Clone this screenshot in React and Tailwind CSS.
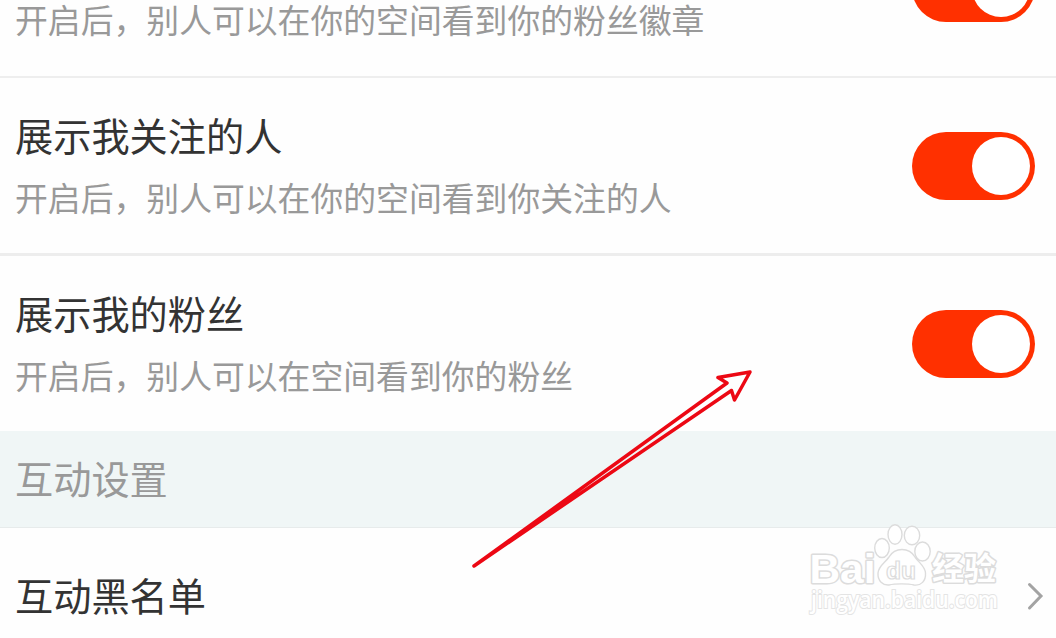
import React, { useState } from 'react';

// Pill shaped on/off switch
const Toggle = ({ defaultOn = true }) => {
  const [on, setOn] = useState(defaultOn);

  return (
    <button
      role="switch"
      aria-checked={on}
      onClick={() => setOn(!on)}
      className={`flex h-[68px] w-[123px] shrink-0 items-center rounded-full pr-[5px] pl-[5px] ${
        on ? 'justify-end bg-[#ff3000]' : 'justify-start bg-[#dddddd]'
      }`}
    >
      <span className="block size-[58px] rounded-full bg-white" />
    </button>
  );
};

const SettingRow = ({ title, desc }) => (
  <div className="flex h-[175px] w-full shrink-0 items-center justify-between pr-[21px] pl-[15px]">
    <div className="h-full whitespace-nowrap pt-[23px]">
      <h2 className="text-[38.2px] leading-[68px] text-[#333333]">{title}</h2>
      <p className="text-[32.85px] leading-[56px] text-[#999999]">{desc}</p>
    </div>
    <Toggle />
  </div>
);

// Red pointer drawn over the list
const Arrow = () => (
  <svg className="pointer-events-none absolute inset-0" width="1056" height="638" fill="none">
    <path
      d="M474 566 L727 383 L718 377.5 L750 372 L734.5 400 L731.5 390.5 Z"
      stroke="#ec0814"
      strokeWidth="3.5"
      strokeLinejoin="round"
    />
  </svg>
);

const Watermark = () => (
  <svg
    className="pointer-events-none absolute top-[520px] left-[804px]"
    width="200"
    height="100"
    viewBox="804 520 200 100"
    fill="#ffffff"
    stroke="#dcdcdc"
    strokeWidth="1.4"
  >
    <g fontWeight="bold" strokeWidth="3" strokeLinejoin="round" paintOrder="stroke">
      <text x="809.5" y="582.5" fontSize="41.5" textLength="66" lengthAdjust="spacingAndGlyphs" fontFamily="Liberation Sans, sans-serif">Bai</text>
      <text x="932" y="580" fontSize="32" textLength="64" lengthAdjust="spacingAndGlyphs" fontFamily="Noto Sans CJK SC, sans-serif">经验</text>
    </g>
    <ellipse cx="882" cy="548" rx="7.3" ry="9.5" />
    <ellipse cx="895" cy="534.5" rx="7" ry="9.7" />
    <ellipse cx="912" cy="535.5" rx="7.7" ry="9.3" />
    <ellipse cx="922.5" cy="551.5" rx="7.7" ry="9.5" />
    <path d="M902 549.5 C896 549.5 892 552 889 557 C885 563 878.5 566 878 573 C877.5 581 883 585.5 889 585 C895 583.5 908 583.5 914 585 C921 586 926 581 925.5 573 C925 566 919 563 915 557 C912 552 908 549.5 902 549.5 Z" />
    <text x="886" y="579" fontSize="24" fontWeight="bold" strokeWidth="1.2" textLength="30" lengthAdjust="spacingAndGlyphs" fontFamily="Liberation Sans, sans-serif">du</text>
    <text x="811" y="608" fontSize="23" fontWeight="600" strokeWidth="2" textLength="187" lengthAdjust="spacingAndGlyphs" paintOrder="stroke" fontFamily="Open Sans, sans-serif" stroke="#e4e4e4">jingyan.baidu.com</text>
  </svg>
);

export default function App() {
  return (
    <div className="relative h-[638px] w-[1056px] overflow-hidden bg-[#fefefe] font-['Noto_Sans_CJK_SC',sans-serif]">
      {/* Row scrolled partly out of view */}
      <div className="flex h-[76px] items-end overflow-hidden pb-px">
        <SettingRow title="展示我的粉丝徽章" desc="开启后，别人可以在你的空间看到你的粉丝徽章" />
      </div>
      <div className="h-0.5 bg-[#eeeeee]" />

      <SettingRow title="展示我关注的人" desc="开启后，别人可以在你的空间看到你关注的人" />
      <div className="h-[3px] bg-[#ededed]" />

      <SettingRow title="展示我的粉丝" desc="开启后，别人可以在空间看到你的粉丝" />

      {/* Section heading */}
      <div className="flex h-[97px] items-center border-b border-[#e7ebeb] bg-[#f0f6f6] pb-0.5 pl-[15px]">
        <h3 className="text-[38.2px] leading-[68px] text-[#999999]">互动设置</h3>
      </div>

      <div className="flex h-[136px] items-center justify-between pr-3 pl-[15px]">
        <h2 className="pb-0.5 text-[38.2px] leading-[68px] text-[#333333]">互动黑名单</h2>
        <svg width="18" height="30" viewBox="0 0 18 30" fill="none" stroke="#a3a3a3" strokeWidth="3" strokeLinecap="round">
          <path d="M3.5 3.5 L15 15 L3.5 27" />
        </svg>
      </div>

      <Watermark />
      <Arrow />
    </div>
  );
}
